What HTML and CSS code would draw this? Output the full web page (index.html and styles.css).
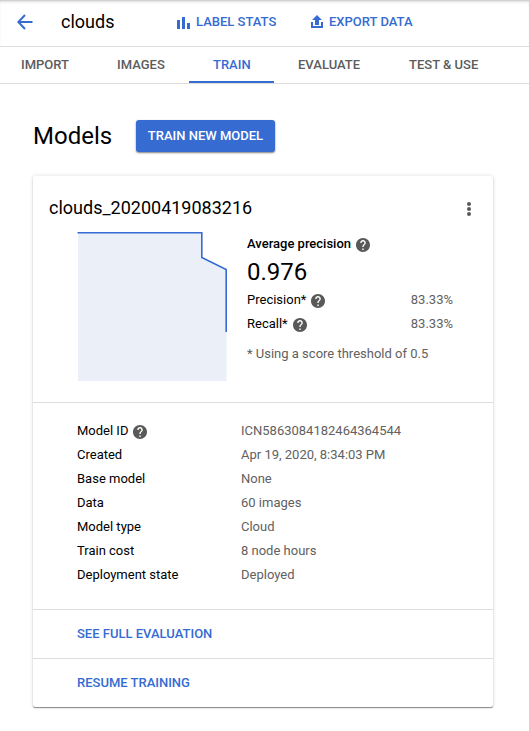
FILE: index.html
```html
<!DOCTYPE html>
<html lang="en">
<head>
<meta charset="utf-8">
<title>clouds - Models</title>
<link rel="stylesheet" href="styles.css">
</head>
<body>
<svg width="0" height="0" class="defs">
  <symbol id="help" viewBox="2 2 20 20"><path d="M12 2C6.480 2 2 6.480 2 12s4.480 10 10 10 10-4.480 10-10S17.520 2 12 2zm1 17h-2v-2h2v2zm2.070-7.750l-.9.920C13.450 12.900 13 13.500 13 15h-2v-.5c0-1.100.450-2.100 1.170-2.830l1.240-1.260c.370-.360.590-.860.590-1.410 0-1.100-.9-2-2-2s-2 .9-2 2H8c0-2.210 1.790-4 4-4s4 1.790 4 4c0 .880-.360 1.680-.930 2.250z"/></symbol>
</svg>
<header class="toolbar">
  <svg class="back" viewBox="0 0 16 16"><path d="M15.500 8H1.500M8 1L1.300 8 8 15"/></svg>
  <h1 class="title">clouds</h1>
  <button class="action stats"><svg width="13" height="12" viewBox="0 0 13 12"><path d="M0 3h3v9H0zM5 0h3v12H5zM10 6h3v6h-3z"/></svg><span>LABEL STATS</span></button>
  <button class="action export"><svg width="12" height="13" viewBox="0 0 12 13"><path d="M6 0l5 5H8v5H4V5H1zM0 7h2v4h8V7h2v6H0z"/></svg><span>EXPORT DATA</span></button>
</header>
<nav class="tabs">
  <a class="tab import">IMPORT</a><a class="tab images">IMAGES</a><a class="tab train active">TRAIN</a><a class="tab evaluate">EVALUATE</a><a class="tab test">TEST &amp; USE</a>
</nav>
<main>
  <div class="heading"><h2>Models</h2><button class="primary">TRAIN NEW MODEL</button></div>
  <section class="card">
    <div class="summary">
      <div class="card-head"><h3>clouds_20200419083216</h3><svg class="more" width="4" height="14" viewBox="0 0 4 14"><circle cx="2" cy="2" r="2"/><circle cx="2" cy="7" r="2"/><circle cx="2" cy="12" r="2"/></svg></div>
      <div class="metrics">
        <svg class="chart" width="150" height="150" viewBox="0 0 150 150"><path class="area" d="M1 1.500H125V26.500L149.500 38.500V150H1z"/><path class="line" d="M.5 1.700H124.800V26.500L149.200 38.500V101"/></svg>
        <div class="scores">
          <div class="score average"><span>Average precision</span><svg class="help"><use href="#help"/></svg></div>
          <div class="value">0.976</div>
          <div class="score"><span>Precision*</span><svg class="help"><use href="#help"/></svg><span class="percent">83.33%</span></div>
          <div class="score"><span>Recall*</span><svg class="help"><use href="#help"/></svg><span class="percent">83.33%</span></div>
          <div class="note">* Using a score threshold of 0.5</div>
        </div>
      </div>
    </div>
    <dl class="details">
      <dt>Model ID<svg class="help"><use href="#help"/></svg></dt><dd>ICN5863084182464364544</dd>
      <dt>Created</dt><dd>Apr 19, 2020, 8:34:03 PM</dd>
      <dt>Base model</dt><dd>None</dd>
      <dt>Data</dt><dd>60 images</dd>
      <dt>Model type</dt><dd>Cloud</dd>
      <dt>Train cost</dt><dd>8 node hours</dd>
      <dt>Deployment state</dt><dd>Deployed</dd>
    </dl>
    <a class="card-action">SEE FULL EVALUATION</a>
    <a class="card-action">RESUME TRAINING</a>
  </section>
</main>
</body>
</html>
```
FILE: styles.css
```css
* { box-sizing: border-box; }
body { margin: 0; height: 731px; overflow: hidden; background: #fff; color: #000; font: 13px/24px Roboto, sans-serif; }
h1, h2, h3, dl, dd { margin: 0; font-weight: 400; }
button { border: 0; padding: 0; font: 500 13px/20px Roboto, sans-serif; }
.defs { display: block; }
.toolbar { height: 47px; display: flex; align-items: center; padding: 0 0 3px 17px; border-bottom: 1px solid #dedede; box-shadow: inset 0 1px #d0d0d0, inset 0 3px 3px -1px #ddd; }
.back { width: 16px; height: 16px; fill: none; stroke: #366bd2; stroke-width: 2; }
.title { width: 116px; margin-left: 28px; font-size: 18px; }
.action { display: flex; align-items: center; background: none; color: #366bd2; white-space: nowrap; }
.action svg { fill: currentColor; flex: none; margin-top: 2px; }
.stats { gap: 6px; width: 134px; }
.export { gap: 6px; }
.export svg { margin-top: 0; }
.tabs { height: 37px; display: flex; border-bottom: 1px solid #dedede; margin-left: -3px; color: #5c5c5c; font-weight: 500; line-height: 35px; white-space: nowrap; }
.tab { flex: none; padding-left: 24px; height: 36px; }
.import, .images { width: 96px; }
.train { width: 85px; }
.evaluate { width: 111px; }
.active { color: #366bd2; border-bottom: 2px solid #366bd2; }
main { padding: 36px 36px 0 33px; }
.heading { display: flex; height: 32px; align-items: center; }
h2 { width: 103px; font-size: 24px; }
.primary { width: 139px; height: 32px; border-radius: 3px; background: #366bd2; color: #fff; box-shadow: 0 1px 2px rgba(0,0,0,.5); }
.card { margin-top: 24px; height: 531px; border-radius: 2px; box-shadow: 0 1px 1px rgba(0,0,0,.45), 0 0 4px rgba(0,0,0,.13); }
.summary { height: 226px; padding: 20px 22px 0 16px; }
.card-head { display: flex; justify-content: space-between; align-items: center; height: 24px; }
h3 { font-size: 18px; }
.more { fill: #595959; margin-top: 2px; }
.metrics { display: flex; padding: 11px 18px 0 28px; }
.chart { display: block; flex: none; }
.area { fill: #eaeff8; }
.line { fill: none; stroke: #366bd2; stroke-width: 1.600; }
.scores { flex: 1; margin: 1px 0 0 20px; }
.score { height: 24px; display: flex; align-items: center; }
.average { font-weight: 500; }
.help { width: 14px; height: 14px; flex: none; margin: 2px 0 0 5px; fill: #595959; }
.value { height: 32px; font-size: 24px; line-height: 32px; }
.percent { margin-left: auto; color: #616161; }
.note { margin-top: 6px; color: #616161; white-space: nowrap; }
.details { height: 207px; padding: 16px 0 0 44px; border-top: 1px solid #dedede; display: grid; grid-template-columns: 164px 1fr; grid-auto-rows: 24px; }
dt { display: flex; align-items: center; }
dd { color: #616161; }
.card-action { display: block; height: 49px; padding-left: 44px; border-top: 1px solid #dedede; color: #366bd2; font-weight: 500; line-height: 48px; }
```
